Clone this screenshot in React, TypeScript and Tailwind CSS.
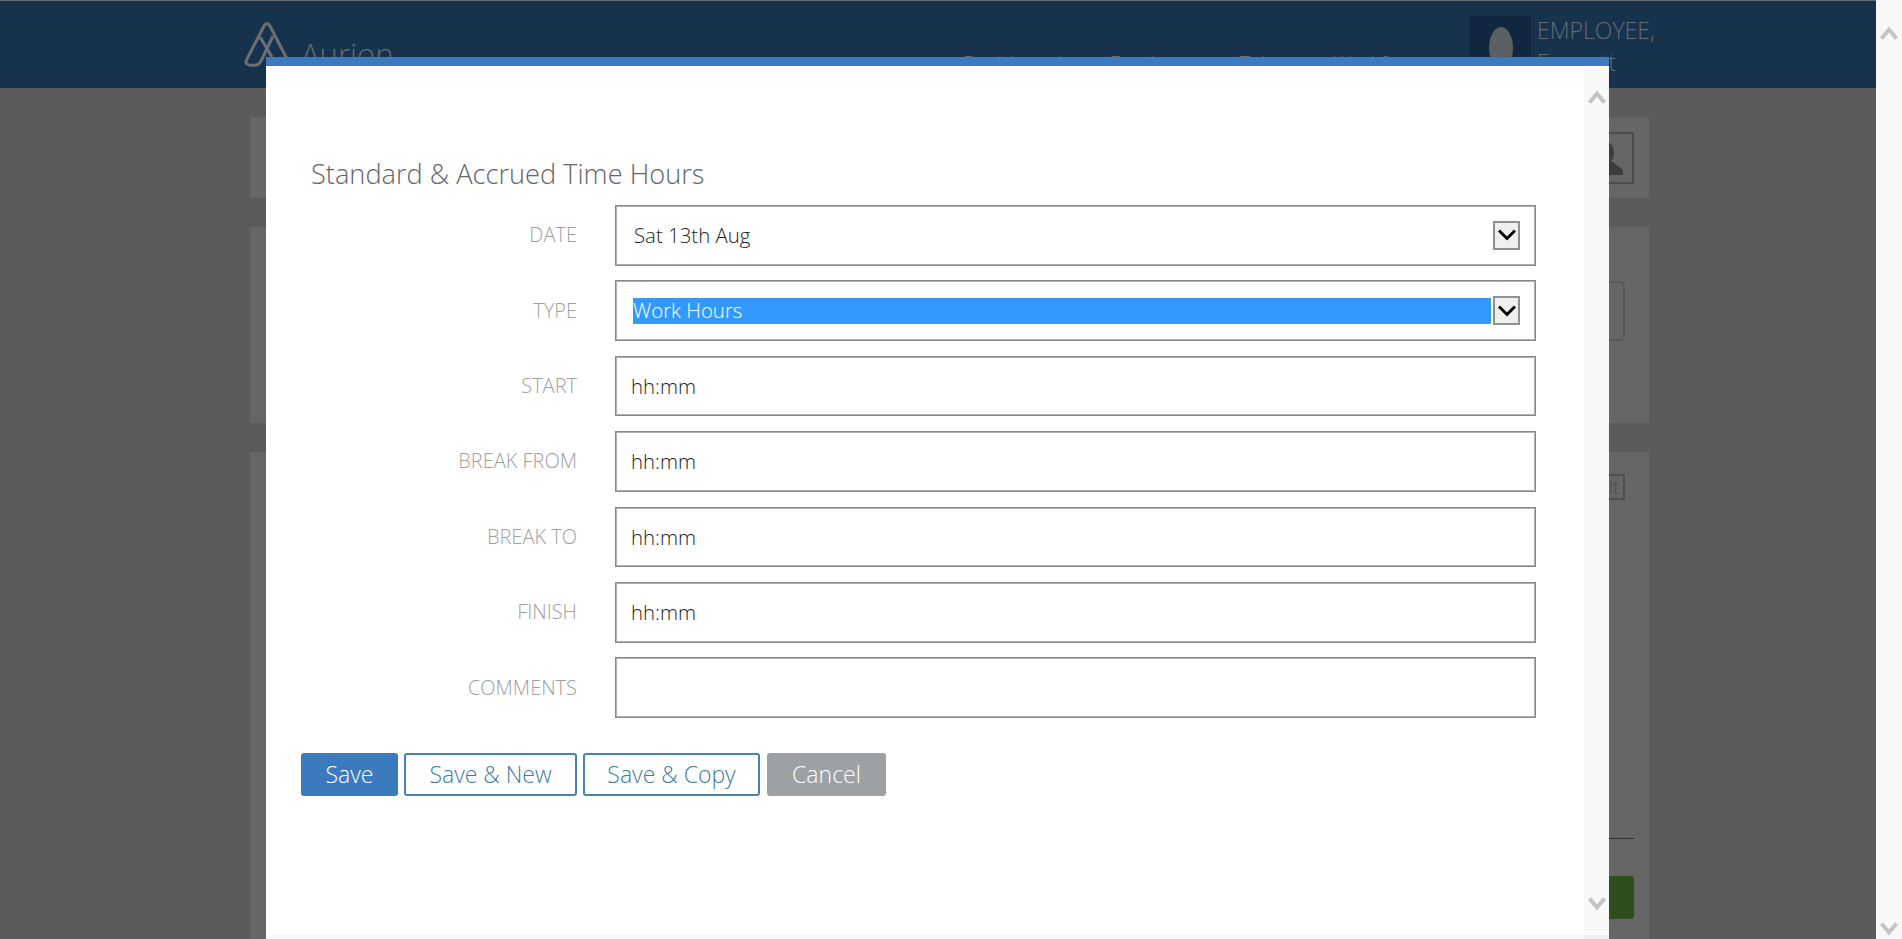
const font = { fontFamily: '"Open Sans", sans-serif' };

const fields = ["START", "BREAK FROM", "BREAK TO", "FINISH", "COMMENTS"];

function ScrollArrows({ top, bottom }: { top: string; bottom: string }) {
  return (
    <div className={`flex h-full flex-col items-center justify-between ${top} ${bottom}`}>
      <svg className="h-[14px] w-[18px]" viewBox="0 0 18 14" fill="none" stroke="#c4c4c4" strokeWidth="4">
        <path d="M1.5 12.5 L9 3.5 L16.5 12.5" />
      </svg>
      <svg className="h-[14px] w-[18px]" viewBox="0 0 18 14" fill="none" stroke="#c4c4c4" strokeWidth="4">
        <path d="M1.5 1.5 L9 10.5 L16.5 1.5" />
      </svg>
    </div>
  );
}

function Row({ label, children }: { label: string; children: React.ReactNode }) {
  return (
    <div className="mb-[14.8px] flex h-[60.6px] items-center">
      <label className="w-[266px] text-right text-[20px] font-light text-[#a0a0a0]">{label}</label>
      <div className="ml-[38px] h-full w-[921px]">{children}</div>
    </div>
  );
}

function SelectBox({ value, selected }: { value: string; selected?: boolean }) {
  return (
    <div className="flex h-full items-center border border-[#85898c] pl-[17px] pr-[15px] shadow-[inset_0_0_0_1px_#aeb1b3]">
      <div
        className={
          selected
            ? "flex h-[26px] flex-1 items-center bg-[#3399ff] text-[20.4px] font-light text-white"
            : "flex h-[26px] flex-1 items-center pl-px text-[20.4px] font-light text-[#222]"
        }
      >
        {value}
      </div>
      <div className="ml-[2px] flex h-[29px] w-[27px] items-center justify-center border-2 border-[#909090] bg-[#efefef]">
        <svg className="h-[12px] w-[18px]" viewBox="0 0 18 12" fill="none" stroke="#000" strokeWidth="3">
          <path d="M1 1.5 L9 9.5 L17 1.5" />
        </svg>
      </div>
    </div>
  );
}

export default function App() {
  return (
    <div className="relative flex h-screen w-full overflow-hidden bg-[#f8f8f8]" style={font}>
      {/* page behind the dialog */}
      <div className="flex h-full w-[1876px] flex-col bg-[#5b5b5b]">
        <div className="h-px bg-[#5e6a75]" />
        <header className="flex h-[87px] bg-[#17324d] pl-[244px] text-[#646b71]">
          <svg className="mt-[20px] h-[46px] w-[45px]" viewBox="0 0 45 46" fill="none" stroke="#6d7072" strokeWidth="3" strokeLinejoin="round">
            <path d="M12 44 Q5 45 3 43 Q1 41 3 38 L20 5 Q23 0 26 5 L43 38" />
            <path d="M12 44 Q15 44 18 38 L29 15" />
            <path d="M16 16 L28 36" />
          </svg>
          <div className="ml-[12px] mt-[31px] text-[31px] font-light leading-[44px]">Aurion</div>
          <nav className="ml-[570px] mt-[48px] flex text-[20px] font-light leading-[30px]">
            <span className="w-[146px]">Dashboards</span>
            <span className="w-[130px]">Employee</span>
            <span className="w-[94px]">Talent</span>
            <span>Workforce</span>
          </nav>
          <div className="absolute left-[1470px] top-[16px] flex h-[61px] w-[61px] justify-center border border-[#10243a] bg-[#112740] pt-[10px]">
            <div className="h-[42px] w-[24px] rounded-[50%] bg-[#5a5f63]" />
          </div>
          <div className="absolute left-[1537px] top-[14px] text-[23px] font-light leading-[32px]">
            EMPLOYEE,
            <br />
            <span className="tracking-[1px]">Everett</span>
          </div>
        </header>

        <main className="ml-[250px] flex w-[1399px] flex-1 flex-col gap-[29px] pt-[29px]">
          <section className="flex h-[81px] justify-end bg-[#666666] pr-[15px] pt-[15px]">
            <div className="h-[52px] w-[60px] border-2 border-[#4c4c4c]">
              <svg className="h-[48px] w-[56px]" viewBox="0 0 56 48" fill="#3d3d3d">
                <ellipse cx="29" cy="19" rx="9" ry="12" />
                <path d="M20 28 H37 L47 36 V41 H10 V36 Z" />
              </svg>
            </div>
          </section>
          <section className="flex h-[196px] justify-end bg-[#666666] pr-[24px] pt-[54px]">
            <div className="h-[60px] w-[200px] rounded-[6px] border-2 border-[#595959]" />
          </section>
          <section className="flex flex-1 flex-col items-end bg-[#666666] pr-[15px] pt-[22px]">
            <div className="mr-[9px] flex h-[26px] w-[90px] items-center justify-end border-2 border-[#4f4f4f] pr-[4px] text-[18px] font-light text-[#4d4d4d]">
              Default
            </div>
            <div className="mt-[338px] h-px w-[200px] bg-[#333333]" />
            <div className="mt-[37px] h-[43px] w-[120px] rounded-[3px] bg-[#2e4f1c]" />
          </section>
        </main>
      </div>
      <div className="h-full w-[26px]">
        <ScrollArrows top="pt-[26px]" bottom="pb-[3px]" />
      </div>

      {/* dialog */}
      <div className="absolute bottom-0 left-[266px] top-[57px] flex w-[1343px] flex-col border-t-[9px] border-[#3a7abd] bg-white">
        <div className="flex min-h-0 flex-1">
          <form className="flex-1 pl-[45px] pt-[86px]">
            <h2 className="mb-[13px] h-[40px] text-[27.2px] font-light leading-[44px] text-[#666]">
              Standard &amp; Accrued Time Hours
            </h2>
            <Row label="DATE">
              <SelectBox value="Sat 13th Aug" />
            </Row>
            <Row label="TYPE">
              <SelectBox value="Work Hours" selected />
            </Row>
            {fields.map((f) => (
              <Row key={f} label={f}>
                <div className="flex h-full items-center border border-[#85898c] pl-[15px] text-[20.4px] font-light text-[#222] shadow-[inset_0_0_0_1px_#aeb1b3]">
                  {f === "COMMENTS" ? "" : "hh:mm"}
                </div>
              </Row>
            ))}
            <div className="-ml-[10px] mt-[35px] flex gap-[6px] text-[23px] font-light">
              <button type="button" className="h-[43px] w-[97px] rounded-[3px] bg-[#3a7abd] text-white">
                Save
              </button>
              <button type="button" className="h-[43px] w-[173px] rounded-[3px] border-2 border-[#4a82b5] text-[#4179ad]">
                Save &amp; New
              </button>
              <button type="button" className="h-[43px] w-[177px] rounded-[3px] border-2 border-[#4a82b5] text-[#4179ad]">
                Save &amp; Copy
              </button>
              <button type="button" className="ml-px h-[43px] w-[119px] rounded-[3px] bg-[#9ea1a4] text-white">
                Cancel
              </button>
            </div>
          </form>
          <div className="w-[25px] bg-[#f8f8f8]">
            <ScrollArrows top="pt-[24px]" bottom="pb-[24px]" />
          </div>
        </div>
        <div className="flex h-[4px] bg-[#f8f8f8]">
          <div className="flex-1" />
          <div className="w-[25px] bg-[#f0f0f0]" />
        </div>
      </div>
    </div>
  );
}
